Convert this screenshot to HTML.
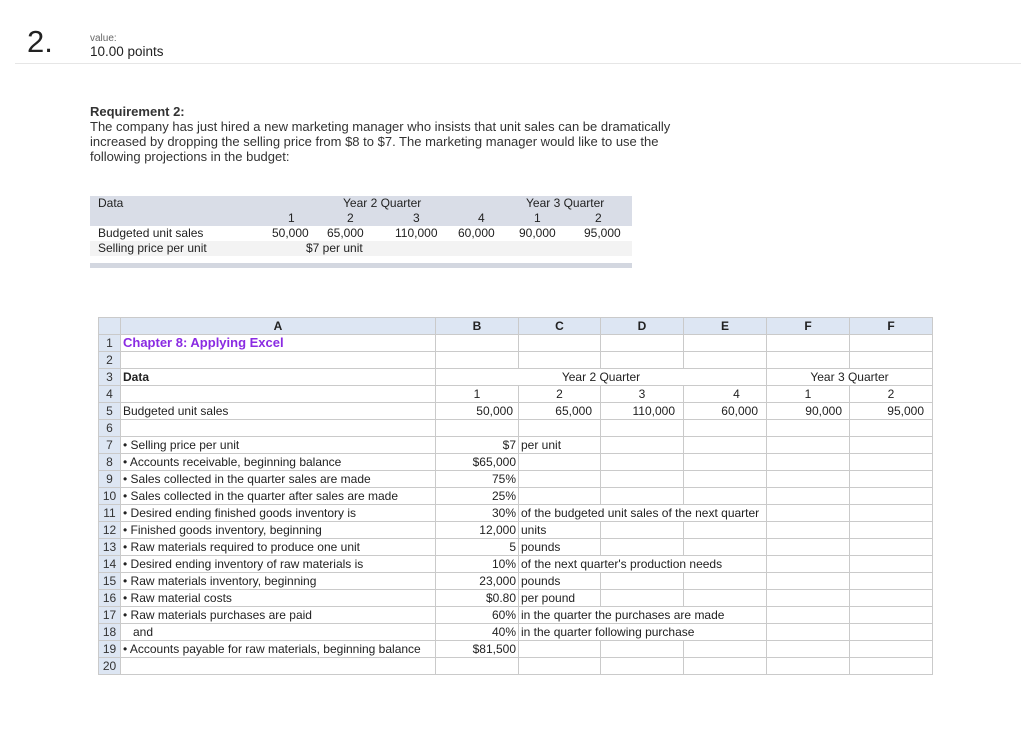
<!DOCTYPE html>
<html><head><meta charset="utf-8"><style>
body{margin:0;background:#fff;font-family:"Liberation Sans",Arial,sans-serif;color:#222;}
.a{position:absolute;white-space:nowrap;}
#wrap{position:relative;width:1021px;height:729px;overflow:hidden;}
table.g{position:absolute;left:98px;top:317px;border-collapse:collapse;table-layout:fixed;font-size:12px;}
table.g td{border:1px solid #cacaca;height:17px;padding:0 2px;line-height:16px;white-space:nowrap;overflow:visible;box-sizing:border-box;}
table.g td.n{background:#dde6f3;text-align:center;padding:0;color:#333;}
table.g tr.h td{background:#dde6f3;text-align:center;font-weight:bold;}
.r{text-align:right;}.c{text-align:center;}
.dt{font-size:12px;color:#222;}
</style></head><body><div id="wrap">
<div class="a" style="left:27px;top:24px;font-size:31px;color:#222;">2.</div>
<div class="a" style="left:90px;top:33px;font-size:10px;color:#666;">value:</div>
<div class="a" style="left:90px;top:44px;font-size:13.5px;color:#222;">10.00 points</div>
<div class="a" style="left:15px;top:63px;width:1006px;height:1px;background:#e6e6e6;"></div>

<div class="a" style="left:90px;top:104px;font-size:13px;line-height:15px;color:#333;">
<b>Requirement 2:</b><br>The company has just hired a new marketing manager who insists that unit sales can be dramatically<br>increased by dropping the selling price from $8 to $7. The marketing manager would like to use the<br>following projections in the budget:</div>

<div class="a" style="left:90px;top:196px;width:542px;height:30px;background:#d9dde7;"></div>
<div class="a" style="left:90px;top:241px;width:542px;height:15px;background:#f3f3f3;"></div>
<div class="a" style="left:90px;top:263px;width:542px;height:5px;background:#d3d7e0;"></div>
<div class="a dt" style="left:98px;top:196px;">Data</div>
<div class="a dt" style="left:343px;top:196px;">Year 2 Quarter</div>
<div class="a dt" style="left:526px;top:196px;">Year 3 Quarter</div>
<div class="a dt" style="left:288px;top:211px;">1</div>
<div class="a dt" style="left:347px;top:211px;">2</div>
<div class="a dt" style="left:413px;top:211px;">3</div>
<div class="a dt" style="left:478px;top:211px;">4</div>
<div class="a dt" style="left:534px;top:211px;">1</div>
<div class="a dt" style="left:595px;top:211px;">2</div>
<div class="a dt" style="left:98px;top:226px;">Budgeted unit sales</div>
<div class="a dt" style="left:272px;top:226px;">50,000</div>
<div class="a dt" style="left:327px;top:226px;">65,000</div>
<div class="a dt" style="left:395px;top:226px;">110,000</div>
<div class="a dt" style="left:458px;top:226px;">60,000</div>
<div class="a dt" style="left:519px;top:226px;">90,000</div>
<div class="a dt" style="left:584px;top:226px;">95,000</div>
<div class="a dt" style="left:98px;top:241px;">Selling price per unit</div>
<div class="a dt" style="left:306px;top:241px;">$7 per unit</div>

<table class="g">
<colgroup><col style="width:22px"><col style="width:315px"><col style="width:83px"><col style="width:82px"><col style="width:83px"><col style="width:83px"><col style="width:83px"><col style="width:83px"></colgroup>
<tr class="h"><td></td><td>A</td><td>B</td><td>C</td><td>D</td><td>E</td><td>F</td><td>F</td></tr>
<tr><td class="n">1</td><td style="color:#8a2be2;font-weight:bold;font-size:13px;">Chapter 8: Applying Excel</td><td></td><td></td><td></td><td></td><td></td><td></td></tr>
<tr><td class="n">2</td><td></td><td></td><td></td><td></td><td></td><td></td><td></td></tr>
<tr><td class="n">3</td><td><b>Data</b></td><td colspan="4" class="c">Year 2 Quarter</td><td colspan="2" class="c">Year 3 Quarter</td></tr>
<tr><td class="n">4</td><td></td><td class="c">1</td><td class="c">2</td><td class="c">3</td><td class="c" style="padding-left:25px">4</td><td class="c">1</td><td class="c">2</td></tr>
<tr><td class="n">5</td><td>Budgeted unit sales</td><td class="r" style="padding-right:5px">50,000</td><td class="r" style="padding-right:8px">65,000</td><td class="r" style="padding-right:8px">110,000</td><td class="r" style="padding-right:8px">60,000</td><td class="r" style="padding-right:7px">90,000</td><td class="r" style="padding-right:8px">95,000</td></tr>
<tr><td class="n">6</td><td></td><td></td><td></td><td></td><td></td><td></td><td></td></tr>
<tr><td class="n">7</td><td>• Selling price per unit</td><td class="r">$7</td><td>per unit</td><td></td><td></td><td></td><td></td></tr>
<tr><td class="n">8</td><td>• Accounts receivable, beginning balance</td><td class="r">$65,000</td><td></td><td></td><td></td><td></td><td></td></tr>
<tr><td class="n">9</td><td>• Sales collected in the quarter sales are made</td><td class="r">75%</td><td></td><td></td><td></td><td></td><td></td></tr>
<tr><td class="n">10</td><td>• Sales collected in the quarter after sales are made</td><td class="r">25%</td><td></td><td></td><td></td><td></td><td></td></tr>
<tr><td class="n">11</td><td>• Desired ending finished goods inventory is</td><td class="r">30%</td><td colspan="3">of the budgeted unit sales of the next quarter</td><td></td><td></td></tr>
<tr><td class="n">12</td><td>• Finished goods inventory, beginning</td><td class="r">12,000</td><td>units</td><td></td><td></td><td></td><td></td></tr>
<tr><td class="n">13</td><td>• Raw materials required to produce one unit</td><td class="r">5</td><td>pounds</td><td></td><td></td><td></td><td></td></tr>
<tr><td class="n">14</td><td>• Desired ending inventory of raw materials is</td><td class="r">10%</td><td colspan="3">of the next quarter's production needs</td><td></td><td></td></tr>
<tr><td class="n">15</td><td>• Raw materials inventory, beginning</td><td class="r">23,000</td><td>pounds</td><td></td><td></td><td></td><td></td></tr>
<tr><td class="n">16</td><td>• Raw material costs</td><td class="r">$0.80</td><td>per pound</td><td></td><td></td><td></td><td></td></tr>
<tr><td class="n">17</td><td>• Raw materials purchases are paid</td><td class="r">60%</td><td colspan="3">in the quarter the purchases are made</td><td></td><td></td></tr>
<tr><td class="n">18</td><td>&nbsp;&nbsp;&nbsp;and</td><td class="r">40%</td><td colspan="3">in the quarter following purchase</td><td></td><td></td></tr>
<tr><td class="n">19</td><td>• Accounts payable for raw materials, beginning balance</td><td class="r">$81,500</td><td></td><td></td><td></td><td></td><td></td></tr>
<tr><td class="n">20</td><td></td><td></td><td></td><td></td><td></td><td></td><td></td></tr>
</table>
</div></body></html>
